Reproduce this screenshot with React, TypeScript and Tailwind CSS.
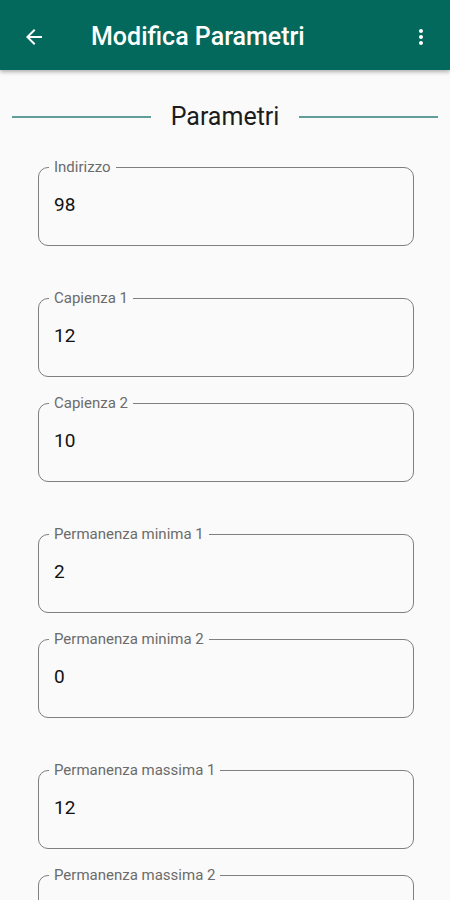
const groups: { label: string; value: string }[][] = [
  [{ label: "Indirizzo", value: "98" }],
  [
    { label: "Capienza 1", value: "12" },
    { label: "Capienza 2", value: "10" },
  ],
  [
    { label: "Permanenza minima 1", value: "2" },
    { label: "Permanenza minima 2", value: "0" },
  ],
  [
    { label: "Permanenza massima 1", value: "12" },
    { label: "Permanenza massima 2", value: "" },
  ],
];

const Field = ({ label, value }: { label: string; value: string }) => (
  <fieldset className="h-[87px] rounded-[10px] border border-[#7f7f7f] px-[10px]">
    <legend className="px-[5px] text-[15px] leading-[16px] text-[#6b6b6b]">{label}</legend>
    <div className="pl-[5px] pt-[18px] text-[19px] leading-[24px] text-[#111]">{value}</div>
  </fieldset>
);

export default function App() {
  return (
    <div
      className="h-[900px] w-[450px] overflow-hidden bg-[#fafafa]"
      style={{ fontFamily: "Roboto, 'Noto Sans', sans-serif" }}
    >
      <header className="relative z-10 flex h-[70px] items-center bg-[#03695c] pt-[3px] shadow-[0_2px_4px_rgba(0,0,0,0.3)]">
        <button className="ml-[22px] flex h-6 w-6 items-center justify-center">
          <svg viewBox="0 0 24 24" width="26" height="26" fill="white">
            <path d="M20 11H7.83l5.59-5.59L12 4l-8 8 8 8 1.41-1.41L7.83 13H20v-2z" />
          </svg>
        </button>
        <h1 className="ml-[45px] text-[25px] font-medium text-white">Modifica Parametri</h1>
        <button className="ml-auto mr-[17px] flex h-6 w-6 items-center justify-center">
          <svg viewBox="0 0 24 24" width="26" height="26" fill="white">
            <path d="M12 8c1.1 0 2-.9 2-2s-.9-2-2-2-2 .9-2 2 .9 2 2 2zm0 2c-1.1 0-2 .9-2 2s.9 2 2 2 2-.9 2-2-.9-2-2-2zm0 6c-1.1 0-2 .9-2 2s.9 2 2 2 2-.9 2-2-.9-2-2-2z" />
          </svg>
        </button>
      </header>

      <div className="mt-[32px] flex h-[30px] items-center gap-5 px-[12px]">
        <div className="h-[1.5px] flex-1 bg-[#5f9e99]" />
        <span className="text-[25px] text-[#1c1c1c]">Parametri</span>
        <div className="h-[1.5px] flex-1 bg-[#5f9e99]" />
      </div>

      <div className="mt-[27px] flex flex-col gap-[44px] pl-[38px] pr-[36px]">
        {groups.map((g, i) => (
          <div key={i} className="flex flex-col gap-[18px]">
            {g.map((f) => (
              <Field key={f.label} label={f.label} value={f.value} />
            ))}
          </div>
        ))}
      </div>
    </div>
  );
}
